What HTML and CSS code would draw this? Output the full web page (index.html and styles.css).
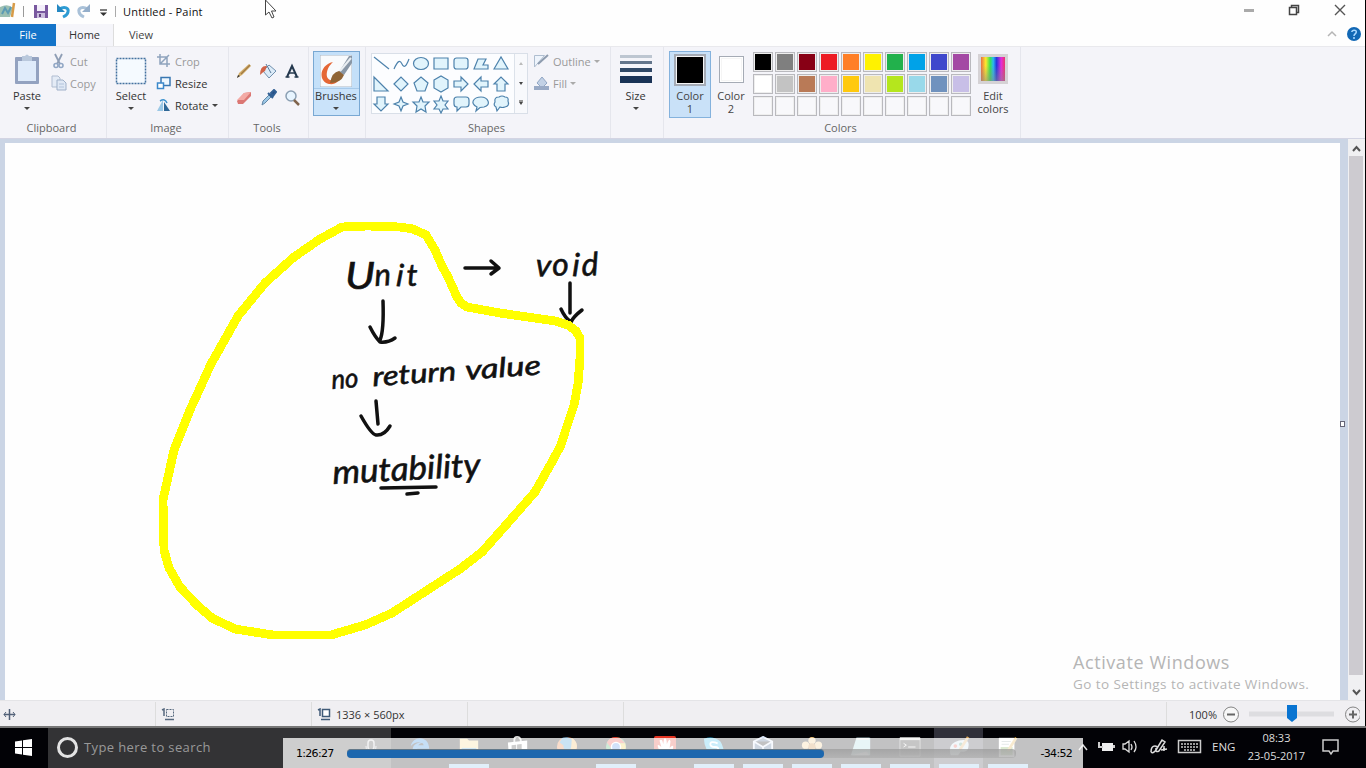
FILE: index.html
```html
<!DOCTYPE html>
<html lang="en">
<head>
<meta charset="utf-8">
<title>Untitled - Paint</title>
<link rel="stylesheet" href="styles.css">
</head>
<body>
<div class="desktop">
<main class="window">
  <header class="titlebar">
    <svg class="quick" width="116" height="24" viewBox="0 0 116 24">
      <path d="M0 7q8-4 13 1l-3 9H0z" fill="#9bbfb2"/><path d="M2 14l3-6 3 5 3-6" stroke="#5b9bb4" stroke-width="2" fill="none"/><path d="M12 17l2-14" stroke="#d79b48" stroke-width="2.5"/>
      <path d="M23.500 6v11" stroke="#999"/>
      <path d="M34 5h14v13H34z" fill="#79589f"/><path d="M37 5h8v6h-8z" fill="#f3eefa"/><path d="M37 13h8v5h-8z" fill="#c9bcdc"/><path d="M39 14h2v3h-2z" fill="#60417f"/>
      <path d="M59 9c6-3 10-1 9 3-.5 3-3 4-5 5" stroke="#2d9bd3" stroke-width="3" fill="none"/><path d="M57 4v8h8z" fill="#2588c2"/>
      <path d="M88 9c-6-3-10-1-9 3 .5 3 3 4 5 5" stroke="#a9c1d8" stroke-width="3" fill="none"/><path d="M90 4v8h-8z" fill="#94aeca"/>
      <path d="M100 10h7" stroke="#555" stroke-width="1.500"/><path d="M100 12.500h7l-3.500 3.500z" fill="#333"/><path d="M115.500 6v11" stroke="#aaa"/>
    </svg>
    <h1 class="title">Untitled - Paint</h1>
    <svg class="controls" width="106" height="24" viewBox="0 0 106 24"><path d="M1 10.500h10" stroke="#aaa" stroke-width="3"/><path d="M46.500 7.500h7v7h-7zM48.500 7V5.500h7v7H54" stroke="#444" stroke-width="1.500" fill="none"/><path d="M92 5l10 10m0-10L92 15" stroke="#555" stroke-width="1.400"/></svg>
  </header>
  <nav class="tabs">
    <a class="tab file">File</a><a class="tab home">Home</a><a class="tab view">View</a>
    <svg class="help" width="40" height="22" viewBox="0 0 40 22"><path d="M10 12l4-4 4 4" stroke="#b5b5b5" stroke-width="1.500" fill="none"/><circle cx="36" cy="10" r="7" fill="#1268b5"/><path d="M33.800 8c.3-2.500 4.700-2.500 4.500 0-.1 1.800-2.300 2-2.300 4m0 1v2" stroke="#a9d8ff" stroke-width="1.500" fill="none"/></svg>
  </nav>
  <section class="ribbon">
    <div class="group clipboard">
      <div class="body">
        <div class="big paste"><svg width="26" height="32" viewBox="0 0 26 32"><rect x="1" y="3" width="24" height="27" rx="1" fill="#93a2c0"/><path d="M4 7h18v20H4z" fill="#dfebfa"/><path d="M8 2h3q2-3 4 0h3v5H8z" fill="#b9c8dc"/></svg><span>Paste</span><i class="arrow"></i></div>
        <div class="rows">
          <div class="row off"><svg width="16" height="16" viewBox="0 0 16 16"><path d="M4 1l5 10M11 1L6 11" stroke="#8f9eb5" stroke-width="1.800"/><circle cx="5" cy="12.500" r="2" fill="none" stroke="#92a7c5" stroke-width="1.600"/><circle cx="10" cy="12.500" r="2" fill="none" stroke="#92a7c5" stroke-width="1.600"/></svg>Cut</div>
          <div class="row off"><svg width="16" height="16" viewBox="0 0 16 16"><path d="M1 1h6l2 2v9H1z" fill="#e4ebf6" stroke="#b0bdd1"/><path d="M6 5h6l3 3v7H6z" fill="#dfe8f5" stroke="#9fb0c9"/><path d="M8 9h5m-5 3h5" stroke="#b2c3dc"/></svg>Copy</div>
        </div>
      </div>
      <div class="label">Clipboard</div>
    </div>
    <div class="group image">
      <div class="body">
        <div class="big select"><svg width="32" height="32" viewBox="0 0 32 32"><rect x="1.500" y="4.500" width="29" height="25" fill="#f5faff" stroke="#43719f" stroke-width="1.500" stroke-dasharray="2 1"/></svg><span>Select</span><i class="arrow"></i></div>
        <div class="rows">
          <div class="row off"><svg width="16" height="16" viewBox="0 0 16 16"><path d="M4 1v10h10M1 4h10v10M4 11l9-9" stroke="#8ea3bd" stroke-width="1.500" fill="none"/></svg>Crop</div>
          <div class="row"><svg width="16" height="16" viewBox="0 0 16 16"><rect x="5" y="2.500" width="9" height="8" fill="#eef7ff" stroke="#3977b2" stroke-width="1.500"/><rect x="1.500" y="8" width="6" height="5.500" fill="#fff" stroke="#3b88cb" stroke-width="1.500"/></svg>Resize</div>
          <div class="row"><svg width="16" height="16" viewBox="0 0 16 16"><path d="M7 3v11H1z" fill="#9bc8e6"/><path d="M8 5l6 9H8z" fill="#2e6797"/><path d="M4 4q5-3 7 2" fill="none" stroke="#3c92cf" stroke-width="1.500"/></svg>Rotate<i class="arrow"></i></div>
        </div>
      </div>
      <div class="label">Image</div>
    </div>
    <div class="group tools">
      <div class="body toolgrid">
        <svg viewBox="0 0 18 18"><path d="M2 16l2-5L14 2l2 2L7 13z" fill="#d2ad69"/><path d="M6 12l9-9" stroke="#a17a45" stroke-width="1.300"/><path d="M2 16l1-3 2 1z" fill="#333"/></svg>
        <svg viewBox="0 0 18 18"><path d="M4 9l6-6 7 6-7 7z" fill="#dcebf8" stroke="#7190ae"/><path d="M7 2l5 9" stroke="#56789a"/><path d="M8 4Q1 3 1 13q3-3 5-4" fill="#d16247"/></svg>
        <svg viewBox="0 0 18 18"><path d="M4 15L9 4l5 11" stroke="#24384e" stroke-width="2" fill="none"/><path d="M6 11h6M2.500 15h4m5 0h4" stroke="#24384e" stroke-width="1.500"/></svg>
        <svg viewBox="0 0 18 18"><path d="M2 12l7-8 7-1v4l-8 8H3z" fill="#db7774"/><path d="M2 11l7-7 7-1-7 8z" fill="#f3aaa5"/></svg>
        <svg viewBox="0 0 18 18"><path d="M3 16l1-4 6-6 2 2-6 6z" fill="#9cc8e7" stroke="#6287a7"/><path d="M9 4l5 5m-2-5l3-3 2 2-3 4z" stroke="#315f94" stroke-width="2" fill="#254d84"/></svg>
        <svg viewBox="0 0 18 18"><circle cx="8" cy="7" r="5" fill="#e7f4ff" stroke="#8b9fb3" stroke-width="1.500"/><path d="M11 11l5 5" stroke="#80644d" stroke-width="2.500"/></svg>
      </div>
      <div class="label">Tools</div>
    </div>
    <div class="group brushes">
      <div class="chosen"><svg width="32" height="32" viewBox="0 0 32 32"><path d="M0 0h32v32H0z" fill="#f8fafc" stroke="#aab6c2"/><path d="M13 7C-1 10-2 27 9 29c7 1 10-3 12-8-7 7-16 5-14-4 1-5 3-7 6-10z" fill="#e56735"/><path d="M19 17L29 1h3v7L24 20z" fill="#8997a6"/><path d="M20 16L31 3" stroke="#e9eef2" stroke-width="2"/><path d="M10 28q2-11 9-12l5 4q-3 8-14 8z" fill="#8f6436"/></svg><span>Brushes</span><i class="arrow"></i></div>
    </div>
    <div class="group shapes">
      <div class="body">
        <div class="gallery">
          <svg class="shapegrid" width="142" height="60" viewBox="0 0 142 60"><g fill="#e1f4fc" stroke="#4d82ac" stroke-width="1.200">
            <path d="M3 3l15 12"/><path d="M23 15c4-9 6-9 8-5s4 3 7-5" fill="none"/><ellipse cx="50" cy="9.500" rx="7.500" ry="6"/><path d="M63 4h14v11H63z"/><rect x="83" y="4" width="14" height="11" rx="2.500"/><path d="M103 15l4-10h8l-3 6h5v4z"/><path d="M123 15l7-12 7 12z"/>
            <path d="M3 23v14h14z"/><path d="M23 30l7-7 7 7-7 7z"/><path d="M43 29l7-6 7 6-3 8h-8z"/><path d="M63 26l7-4 7 4v8l-7 4-7-4z"/><path d="M83 27h7v-4l7 7-7 7v-4h-7z"/><path d="M117 27h-7v-4l-7 7 7 7v-4h7z"/><path d="M123 30l7-7 7 7h-3v7h-8v-7z"/>
            <path d="M3 50h3v-7h8v7h3l-7 7z"/><path d="M30 43l2 5 5 2-5 2-2 5-2-5-5-2 5-2z"/><path d="M50 43l2 5h6l-4 4 1 6-5-3-5 3 1-6-4-4h6z"/><path d="M70 42l2 5h5l-3 4 3 4h-5l-2 4-2-4h-5l3-4-3-4h5z"/><path d="M86 43h9q3 0 3 3v4q0 3-3 3h-5l-4 4v-4q-3 0-3-3v-4q0-3 3-3z"/><path d="M106 53c-8-4-3-10 4-10s11 8 3 10l-4 .500-4 3.500z"/><path d="M125 53q-3-2-1-5-1-5 4-5 3-2 6 0 4 0 3 4 2 5-3 6-3 1-5 0l-3 4z"/>
          </g></svg>
          <div class="scroll"><i class="arrow up"></i><i class="arrow"></i><i class="arrow more"></i></div>
        </div>
        <div class="rows">
          <div class="row off"><svg width="17" height="16" viewBox="0 0 17 16"><path d="M1.500 2.500h10L1.500 14z" fill="#eef4fc" stroke="#afbed0"/><path d="M5 11l10-9" stroke="#8e9caf" stroke-width="2"/></svg>Outline<i class="arrow"></i></div>
          <div class="row off"><svg width="17" height="16" viewBox="0 0 17 16"><path d="M4 8l5-6 5 6-5 5z" fill="#c2d1e6" stroke="#91a6c4"/><path d="M1 11h15v4H1z" fill="#99aac6"/></svg>Fill<i class="arrow"></i></div>
        </div>
      </div>
      <div class="label">Shapes</div>
    </div>
    <div class="group size"><div class="big"><svg width="32" height="32" viewBox="0 0 32 32"><path d="M0 2.500h32" stroke="#bdc6d1" stroke-width="3"/><path d="M0 8.500h32" stroke="#63758b" stroke-width="3"/><path d="M0 16h32" stroke="#304866" stroke-width="4"/><path d="M0 25.500h32" stroke="#1a3356" stroke-width="7"/></svg><span>Size</span><i class="arrow"></i></div></div>
    <div class="group colors">
      <div class="body">
        <div class="color one"><b class="swatch black"></b><span>Color</span><span>1</span></div>
        <div class="color two"><b class="swatch white"></b><span>Color</span><span>2</span></div>
        <div class="palette"><i class="c1"></i><i class="c2"></i><i class="c3"></i><i class="c4"></i><i class="c5"></i><i class="c6"></i><i class="c7"></i><i class="c8"></i><i class="c9"></i><i class="c10"></i><i class="c11"></i><i class="c12"></i><i class="c13"></i><i class="c14"></i><i class="c15"></i><i class="c16"></i><i class="c17"></i><i class="c18"></i><i class="c19"></i><i class="c20"></i><i></i><i></i><i></i><i></i><i></i><i></i><i></i><i></i><i></i><i></i></div>
        <div class="color edit"><b class="rainbow"></b><span>Edit</span><span>colors</span></div>
      </div>
      <div class="label">Colors</div>
    </div>
  </section>
  <section class="workspace">
    <div class="paper">
      <svg width="1335" height="556" viewBox="5 143 1335 556">
        <g class="ink"><path d="M465 268h33M491 261l8 7-8 6"/><path d="M570 283v30M561 309q4 9 10 13 2-5 11-12"/><path d="M383 301q1 30-3 39M370 327q5 10 10 15 8 1 15-4"/><path d="M376 401l2 23M361 416q10 18 15 19 8 1 14-9"/><path d="M381 488l55-1M407 494l11-1"/></g>
        <g class="writing"><text x="345" y="289" font-size="36" textLength="30" lengthAdjust="spacingAndGlyphs">U</text><text x="375" y="286" font-size="31" textLength="43" rotate="-3 4 -2">nit</text><text x="535" y="276" font-size="32" textLength="64" rotate="4 -4 2 -3">void</text><g transform="translate(332 389) rotate(-4)" font-size="27"><text textLength="27" lengthAdjust="spacingAndGlyphs">no</text><text x="41" textLength="84" lengthAdjust="spacingAndGlyphs">return</text><text x="134" textLength="76" lengthAdjust="spacingAndGlyphs">value</text></g><text transform="translate(333 484) rotate(-3)" font-size="33" textLength="148" lengthAdjust="spacingAndGlyphs">mutability</text></g>
        <path class="highlight" d="M342 227L368 226 400 227 413 229 426 235 435 250 442 266 448 277 457 297 461 303 467 307 500 313 555 321 568 325 576 331 580 338 580 358 578 384 574 405 566 429 561 445 553 460 535 492 506 525 482 552 460 569 392 613 365 625 331 635 273 635 235 629 212 618 197 605 180 587 169 568 164 550 163 500 174 450 190 410 211 364 238 316 265 283 294 257 320 239z"/>
      </svg>
      <div class="watermark"><p class="w1">Activate Windows</p><p class="w2">Go to Settings to activate Windows.</p></div>
    </div>
    <i class="handle"></i>
    <div class="scrollbar"><svg width="16" height="17" viewBox="0 0 16 17"><path d="M5 12l3.500-4L12 12" stroke="#555" stroke-width="2" fill="none"/></svg><div class="thumb"></div><svg width="16" height="20" viewBox="0 0 16 20"><path d="M5 10l3.500 4L12 10" stroke="#555" stroke-width="2" fill="none"/></svg></div>
  </section>
  <footer class="status">
    <div class="cell pos"><svg width="13" height="13" viewBox="0 0 13 13"><path d="M1 6.500h11M6.500 1v11" stroke="#526178" stroke-width="1.500"/><path d="M3 4L1 6.500 3 9m7-5l2 2.500L10 9" fill="none" stroke="#526178"/></svg></div>
    <div class="cell sel"><svg width="14" height="13" viewBox="0 0 14 13"><path d="M1 2l2-1v7M4 11.500h9" stroke="#57697f" stroke-width="1.500" fill="none"/><path d="M5.500 1.500h7v7h-7z" fill="none" stroke="#57697f" stroke-dasharray="2 1"/></svg></div>
    <div class="cell dims"><svg width="14" height="13" viewBox="0 0 14 13"><path d="M1 2l2-1v7M4 11.500h9" stroke="#405b78" stroke-width="1.500" fill="none"/><path d="M5.500 1.500h7v7h-7z" fill="#fff" stroke="#405b78" stroke-width="1.500"/></svg><span>1336 × 560px</span></div>
    <div class="cell empty"></div>
    <div class="cell gap"></div>
    <div class="zoom"><span>100%</span><svg width="138" height="24" viewBox="1222 702 138 24"><circle cx="1231" cy="714.500" r="7.500" fill="#f7f7f7" stroke="#858585"/><path d="M1227 714.500h8M1349 714.500h8M1353 710.500v8" stroke="#666" stroke-width="2"/><path d="M1249 714h85" stroke="#dddde0" stroke-width="5"/><path d="M1287 705h10v13l-5 4-5-4z" fill="#0874d1"/><circle cx="1353" cy="714.500" r="7.500" fill="none" stroke="#858585"/></svg></div>
  </footer>
</main>
<footer class="taskbar">
  <div class="start"><svg width="17" height="17" viewBox="0 0 17 17"><path d="M0 2.500l7-1v6.500H0zM8 1.300L17 0v8H8zM0 9h7v6.500l-7-1zM8 9h9v8l-9-1.300z" fill="#fff"/></svg></div>
  <div class="search"><i class="ring"></i><span>Type here to search</span><svg width="12" height="22" viewBox="0 0 12 22"><rect x="3" y="4" width="6" height="10" rx="3" fill="none" stroke="#ccc" stroke-width="1.500"/><path d="M1 10q0 7 5 7t5-7" stroke="#ccc" fill="none"/></svg></div>
  <div class="apps">
    <span><svg viewBox="0 0 24 24"><path d="M2 11C4-1 22-1 22 14H9q0 7 12 4v3C9 26 1 19 5 11q3-4 8-4Q6 6 2 11zm8-1h6q-1-5-6 0z" fill="#1379d8"/></svg></span>
    <span class="open"><svg viewBox="0 0 24 24"><path d="M2 3h8l2 2h10v17H2z" fill="#f5d47e"/><path d="M4 13h16v8H4z" fill="#3b9bd9"/><path d="M8 17h8v5H8z" fill="#f5d47e"/></svg></span>
    <span><svg viewBox="0 0 24 24"><path d="M8 8V4q0-3 3-3t4 3v4" stroke="#ddd" stroke-width="2" fill="none"/><path d="M1 7l21-2v18L2 21z" fill="#fff"/><path d="M5 10l5-.5v5H5zm6-.7l5-.5v5.700h-5zM5 15h5v5l-5-.5zm6 0h5v5.700l-5-.5z" fill="#333"/></svg></span>
    <span><svg viewBox="0 0 24 24"><circle cx="12" cy="12" r="11" fill="#e46f26"/><path d="M7 2q10-3 13 6t-5 10Q8 18 8 10l-4-3z" fill="#2589cf"/><path d="M17 2q9 6 4 14t-12 6q9-3 8-20z" fill="#f3b551"/></svg></span>
    <span class="open"><svg viewBox="0 0 24 24"><circle cx="12" cy="12" r="11" fill="#36a65a"/><path d="M2 7Q7-1 16 2l6 6H12l-4 7z" fill="#e4382e"/><path d="M12 8h10q3 12-9 15l4-8z" fill="#f4c932"/><circle cx="12" cy="12" r="5" fill="#4187e8" stroke="#fff" stroke-width="1.500"/></svg></span>
    <span><svg viewBox="0 0 24 24"><rect width="24" height="24" rx="2" fill="#e33423"/><path d="M7 20L4 11q0-3 4 1L6 5q3-3 4 4l1-6q3-2 3 6 3-8 4-3l-1 7q4-4 4-1-1 8-7 9z" fill="#fff"/></svg></span>
    <span class="open"><svg viewBox="0 0 24 24"><path d="M1 3q10-4 18 3 4 6 4 16-14 3-19-7Q1 9 1 3z" fill="#23b4e8"/><path d="M16 8q-8-3-8 1 0 3 5 3t3 4q-3 3-8 0" fill="none" stroke="#fff" stroke-width="2"/></svg></span>
    <span class="open"><svg viewBox="0 0 24 24"><path d="M12 1l10 5v11l-10 6-10-6V6zm0 11v10M2 6l10 6 10-6" fill="#365785" stroke="#dce7fa" stroke-width="2"/></svg></span>
    <span class="open"><svg viewBox="0 0 24 24"><g fill="#f3c881"><circle cx="12" cy="5" r="4"/><circle cx="5" cy="10" r="4"/><circle cx="19" cy="10" r="4"/><circle cx="7" cy="18" r="4"/><circle cx="17" cy="18" r="4"/></g><circle cx="12" cy="12" r="4" fill="#c57d2d"/></svg></span>
    <span class="open"><svg viewBox="0 0 24 24"><path d="M7 2h15v19H1z" fill="#9ed5dd"/><path d="M7 3h14" stroke="#eee" stroke-width="2"/><path d="M2 21h19l-3-4z" fill="#f3faff"/></svg></span>
    <span class="open"><svg viewBox="0 0 24 24"><path d="M1 2h22v20H1z" fill="#111" stroke="#888"/><path d="M1 3h22" stroke="#ddd" stroke-width="3"/><path d="M5 8l3 2-3 2m5 0h8" fill="none" stroke="#eee"/></svg></span>
    <span class="open active"><svg viewBox="0 0 24 24"><path d="M3 21Q-1 8 12 5t10 8q-1 5-8 4l-3 4z" fill="#c8dfed"/><circle cx="8" cy="11" r="2" fill="#e04c42"/><circle cx="14" cy="9" r="2" fill="#368d68"/><path d="M13 15l9-14" stroke="#d9a65b" stroke-width="3"/></svg></span>
    <span class="open"><svg viewBox="0 0 24 24"><path d="M2 2h17v21H2z" fill="#fff"/><path d="M4 12h13v9H4z" fill="#72a943"/><path d="M5 6h10m-10 3h8" stroke="#899"/><path d="M12 16l9-14" stroke="#e2a936" stroke-width="3"/></svg></span>
  </div>
  <div class="tray">
    <svg width="124" height="30" viewBox="1078 732 124 30"><path d="M1079 750l4-5 4 5" stroke="#ddd" stroke-width="1.500" fill="none"/><rect x="1102" y="743" width="11" height="8" fill="#eee"/><path d="M1099 742v5h4M1114 745v3" stroke="#ccc" stroke-width="2" fill="none"/><path d="M1123 744v5h2l4 3v-11l-4 3zm8 0q2 3 0 6m3-9q4 6 0 11" stroke="#ddd" stroke-width="1.300" fill="none"/><path d="M1151 752q0-6 4-6 4 0 1 4-3 4-5 2m5-2l6-10 3 2-6 9q-4 2-3-3m5 2l6-1m-3-3v5" stroke="#ddd" stroke-width="1.500" fill="none"/><rect x="1178.500" y="740.500" width="22" height="12" fill="none" stroke="#ccc" stroke-width="1.500"/><path d="M1181 744h17m-17 3h17m-14 3h11" stroke="#ccc" stroke-width="1.500" stroke-dasharray="2 1"/></svg>
    <span class="lang">ENG</span><div class="clock"><span>08:33</span><span>23-05-2017</span></div>
    <svg width="18" height="18" viewBox="0 0 18 18"><path d="M1 2h15v11h-5l-2 3-2-3H1z" stroke="#ccc" stroke-width="1.500" fill="none"/></svg>
  </div>
</footer>
<div class="player"><span class="elapsed">1:26:27</span><div class="track"><div class="played"></div></div><span class="remain">-34:52</span></div>
<svg class="cursor" width="14" height="21" viewBox="0 0 14 21"><path d="M1.500 0v15l3.500-3 3 6 2-1-2.500-6H12z" fill="#fff" stroke="#444"/></svg>
</div>
</body>
</html>
```

FILE: styles.css
```css
*{box-sizing:border-box}
body{margin:0;background:#000;font:11px "Open Sans",sans-serif;color:#444}
h1,p{margin:0}svg{display:block;flex:none}i,b{font-style:normal}
.desktop{position:relative;width:1366px;height:768px;overflow:hidden}
.window{width:1365px;height:726px;background:#fefefe;display:flex;flex-direction:column}
.titlebar{height:24px;display:flex;align-items:center}
.title{font-size:11px;font-weight:400;color:#111;margin-left:7px;flex:1;letter-spacing:.2px;padding-bottom:2px}
.controls{margin-right:16px}
.tabs{height:22px;display:flex;align-items:stretch}
.tab{display:flex;align-items:center;justify-content:center;padding-bottom:1px}
.file{width:56px;background:#1474c9;color:#fff}.home{width:58px;background:#f5f5fa;border-right:1px solid #ddd;color:#333}.view{width:54px}
.help{margin-left:auto;margin-right:7px;overflow:visible}
.ribbon{height:92px;background:#f4f4f9;border-top:1px solid #e9e9ed;display:flex}
.group{border-right:1px solid #e5e6ed;display:flex;flex-direction:column;flex:none}
.body{height:72px;display:flex}
.label{text-align:center;line-height:18px;color:#666}
.clipboard{width:107px}.image{width:122px}.tools{width:80px}.brushes{width:57px}.shapes{width:245px}.size{width:53px}.colors{width:357px}
.clipboard .label,.image .label,.tools .label,.shapes .label,.colors .label{padding-right:3px}
.big{display:flex;flex-direction:column;align-items:center;padding-top:7px;height:72px;color:#333}
.big span,.chosen span{line-height:15px;margin-top:2px}
.arrow{border:3px solid transparent;border-top:3px solid #444;border-bottom:0;display:block;margin-top:4px}
.paste{width:38px;margin-left:8px}.select{width:40px;margin-left:4px}
.rows{display:flex;flex-direction:column;padding-top:3px}
.row{display:flex;align-items:center;height:22px;gap:3px;color:#333}
.row .arrow{margin:0}.off{color:#999}.off .arrow{border-top-color:#aaa}
.clipboard .rows{margin-left:5px}.image .rows{margin-left:5px}
.toolgrid{display:grid;grid-template-columns:18px 18px 18px;grid-template-rows:18px 18px;gap:9px 6px;padding:15px 0 0 6px}
.chosen{width:47px;height:65px;margin:4px 0 0 4px;padding:3px 1px 0 0;background:linear-gradient(#c4e0f9 0 36px,#a7caea 36px 37px,#cae3fa 37px);border:1px solid #79a8d3;display:flex;flex-direction:column;align-items:center;color:#333}
.chosen span{margin-top:1px}
.gallery{width:157px;height:61px;margin:6px 0 0 5px;background:#fcfdff;border:1px solid #d9dfe8;display:flex}
.shapegrid{margin-left:-1px}
.scroll{width:13px;margin-left:1px;border-left:1px solid #dce2ea;background:#f8f9fc;display:flex;flex-direction:column;align-items:center;justify-content:space-around}
.scroll .arrow{margin:0;border-width:3px 2.500px 0}.scroll .up{border-top:0;border-bottom:3px solid #bbb}.more{box-shadow:0 -2px #999}
.shapes .rows{margin-left:5px}
.size .big{margin-right:3px}
.color{display:flex;flex-direction:column;align-items:center;line-height:13px}
.color span:first-of-type{margin-top:auto}
.one{width:42px;height:67px;background:#c9e1f8;border:1px solid #84b2dd;margin:4px 0 0 5px;padding:2px 0 2px}
.two{width:40px;height:67px;margin-top:4px;padding:5px 0 3px}
.swatch{border:2px solid #a5abb5;outline:1px solid #f5f5f5;outline-offset:-3px}
.black{width:32px;height:32px;background:#000}.white{width:25px;height:27px;background:#fff;border-width:1.500px}
.palette{display:grid;grid-template-columns:repeat(10,20px);grid-template-rows:repeat(3,20px);gap:2px;margin:5px 0 0 2px}
.palette i{border:1px solid #b9b9be;background:#f8f8fb;box-shadow:inset 0 0 0 1px #eee}
.edit{width:42px;height:67px;margin:4px 0 0 1px;padding:3px 0 3px}
.rainbow{width:30px;height:30px;border:3px solid #d5d2d5;background:linear-gradient(transparent 35%,#8888),linear-gradient(90deg,#e76f43,#ffe92e 20%,#38e34e 38%,#29baf0 51%,#2734dc 65%,#e42cdb 84%,#e8376c)}
.palette .c1{background:#000}.palette .c2{background:#7f7f7f}.palette .c3{background:#880015}.palette .c4{background:#ed1c24}.palette .c5{background:#ff7f27}.palette .c6{background:#fff200}.palette .c7{background:#22b14c}.palette .c8{background:#00a2e8}.palette .c9{background:#3f48cc}.palette .c10{background:#a349a4}.palette .c11{background:#fff}.palette .c12{background:#c3c3c3}.palette .c13{background:#b97a57}.palette .c14{background:#ffaec9}.palette .c15{background:#ffc90e}.palette .c16{background:#efe4b0}.palette .c17{background:#b5e61d}.palette .c18{background:#99d9ea}.palette .c19{background:#7092be}.palette .c20{background:#c8bfe7}
.workspace{height:562px;background:#cbd5e5;padding-left:5px;border-top:1px solid #d3d4e3;display:flex}
.paper{position:relative;width:1335px;height:557px;margin-top:4px;background:#fefefe}
.ink{fill:none;stroke:#111;stroke-width:3.500;stroke-linecap:round;stroke-linejoin:round}
.writing{font-family:Lato,sans-serif;font-style:italic;fill:#111;stroke:#111;stroke-width:.6}
.highlight{fill:none;stroke:#ff0;stroke-width:8.800;stroke-linejoin:round;shape-rendering:crispEdges}
.watermark{position:absolute;left:1068px;top:507px;color:#b5b5b5;white-space:nowrap}
.w1{font-size:18px;line-height:24px;letter-spacing:.58px}.w2{font-size:13.500px;line-height:20px;letter-spacing:.43px}
.handle{width:5px;height:6px;border:1px solid #667;background:#fff;align-self:center;margin:8px 3px 0 0}
.scrollbar{width:17px;background:#f0f0f2;display:flex;flex-direction:column}
.thumb{width:14px;height:519px;margin-left:1px;background:#cdcbd0}.scrollbar svg:last-child{margin-top:auto}
.status{height:26px;background:#f0eff2;border-top:1px solid #e4e4e7;display:flex;align-items:center;color:#333;padding-top:1px}
.cell{height:24px;border-right:1px solid #ddd;display:flex;align-items:center;gap:5px}
.pos{width:156px;padding-left:3px}.sel{width:156px;padding-left:5px}.dims{width:156px;padding-left:5px}.empty{width:156px}.gap{width:543px}
.zoom{flex:1;display:flex;align-items:center;justify-content:flex-end;gap:5px;padding-right:5px}
.taskbar{height:42px;background:#020206;border-top:2px solid #777;display:flex;color:#ddd}
.start{width:48px;padding:0 0 2px 15px;display:flex;align-items:center}
.search{width:343px;background:#333335;display:flex;align-items:center;font-size:13px;letter-spacing:.38px;color:#999;padding:0 0 2px 9px}
.search span{margin-left:6px;flex:1}.search svg{margin-right:14px}
.ring{width:21px;height:21px;border:3px solid #e3e3e3;border-radius:50%}
.apps{display:flex;width:637px;padding-left:4px;flex:none}
.apps span{width:49px;flex:none;display:flex;align-items:center;justify-content:center;padding-bottom:3px}
.apps svg{width:22px;height:22px}.open{background:linear-gradient(#83bdeb,#83bdeb) center bottom/40px 4px no-repeat}.apps .active{background-color:#30303a}
.tray{display:flex;align-items:center;margin-left:50px;gap:10px;padding-bottom:2px}
.lang{font-size:11.500px;padding-bottom:1px}.clock{width:62px;display:flex;flex-direction:column;align-items:center;line-height:18px;font-size:11px;white-space:nowrap}
.tray>svg:last-child{margin-left:5px}
.player{position:absolute;left:283px;top:738px;width:800px;height:30px;background:rgba(255,255,255,.76);display:flex;align-items:center;font:11px "DejaVu Sans",sans-serif;color:#000;padding:0 11px 0 13px}
.elapsed{width:51px;letter-spacing:-.7px}.track{width:669px;height:9px;border-radius:4px;background:linear-gradient(#9b9b9bbb,#aeaeaebb)}.played{width:477px;height:9px;border-radius:4px;background:#1c67ae;border-top:1px solid #627889}.remain{margin-left:auto;letter-spacing:-.7px}
.cursor{position:absolute;left:264px;top:0}
```
